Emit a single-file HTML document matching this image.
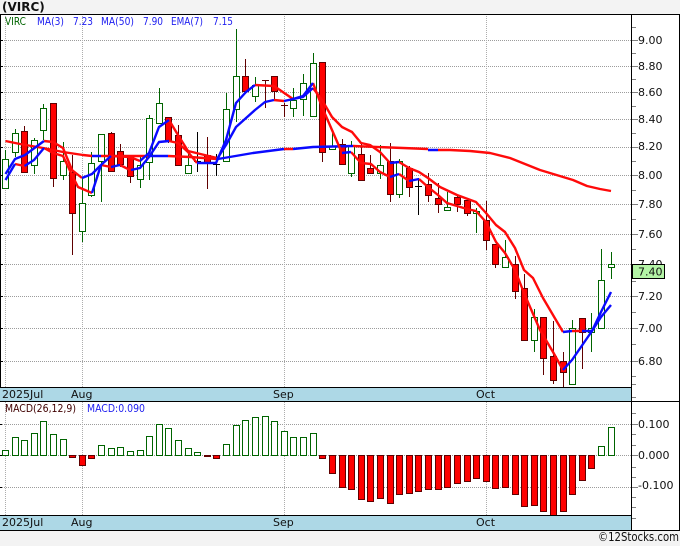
<!DOCTYPE html>
<html>
<head>
<meta charset="utf-8">
<style>
html,body{margin:0;padding:0;width:680px;height:546px;overflow:hidden;background:#f3f3f3}
svg{display:block}
text{font-family:"DejaVu Sans","Liberation Sans",sans-serif;font-size:11px;fill:#111}
.s{font-size:11px}
</style>
</head>
<body>
<svg width="680" height="546" viewBox="0 0 680 546" xmlns="http://www.w3.org/2000/svg">
<rect x="0" y="0" width="680" height="546" fill="#f3f3f3"/>
<rect x="0" y="14" width="680" height="516" fill="#fff"/>
<rect x="0" y="388" width="632" height="13" fill="#add8e6"/>
<rect x="0" y="516" width="632" height="14" fill="#add8e6"/>

<!-- grid -->
<path d="M0 40.5H632M0 66.5H632M0 92.5H632M0 119.5H632M0 147.5H632M0 175.5H632M0 204.5H632M0 234.5H632M0 264.5H632M0 296.5H632M0 328.5H632M0 361.5H632M0 424.5H632M0 455.5H632M0 487.5H632" stroke="#9c9c9c" stroke-dasharray="1 1" fill="none"/>
<path d="M5.5 14V388M82.5 14V388M284.5 14V388M486.5 14V388M5.5 402V516M82.5 402V516M284.5 402V516M486.5 402V516" stroke="#adadad" stroke-dasharray="1 1" fill="none"/>

<!-- candle wicks -->
<g shape-rendering="crispEdges" fill="none">
<path stroke="#006400" d="M5.5 150V188M15.5 129V157M34.5 138V174M43.5 104V140M63.5 142V180M82.5 178V242M91.5 152V197M101.5 134V202M140.5 157V188M149.5 115V180M159.5 88V123M188.5 153V173M226.5 93V161M236.5 29V122M255.5 77V102M293.5 88V117M303.5 74V116M313.5 53V116M332.5 133V149M351.5 141V177M380.5 145V179M399.5 159V198M447.5 192V210M476.5 208V233M505.5 240V267M534.5 309V352M572.5 320V384M591.5 313V352M601.5 249V328M611.5 252V279"/>
<path stroke="#600000" d="M24.5 126V173M53.5 103V187M72.5 155V255M111.5 132V172M120.5 144V167M130.5 157V183M168.5 117V143M178.5 125V165M207.5 137V189M245.5 59V91M265.5 80V108M262 80.5H269M274.5 76V100M284.5 103V117M281 105.5H288M322.5 62V162M342.5 139V164M361.5 142V180M370.5 155V174M390.5 143V202M409.5 166V197M428.5 173V202M438.5 183V213M457.5 195V212M467.5 198V216M486.5 201V250M495.5 244V268M515.5 256V299M524.5 274V340M543.5 317V375M553.5 321V384M563.5 352V387M582.5 318V369"/>
<path stroke="#000" d="M197.5 132V172M194 161.5H201M216.5 154V176M213 164.5H220M418.5 178V215M415 186.5H422"/>
<!-- green bodies -->
<path stroke="#006400" fill="#fff" d="M2.5 159.5h6v29h-6zM12.5 133.5h6v19h-6zM31.5 140.5h6v25h-6zM40.5 108.5h6v22h-6zM60.5 161.5h6v14h-6zM79.5 203.5h6v28h-6zM88.5 163.5h6v32h-6zM98.5 134.5h6v27h-6zM137.5 165.5h6v14h-6zM146.5 118.5h6v44h-6zM156.5 103.5h6v20h-6zM185.5 165.5h6v8h-6zM223.5 109.5h6v52h-6zM233.5 76.5h6v33h-6zM252.5 85.5h6v11h-6zM290.5 100.5h6v8h-6zM300.5 83.5h6v16h-6zM310.5 63.5h6v53h-6zM329.5 146.5h6v3h-6zM348.5 145.5h6v28h-6zM377.5 165.5h6v8h-6zM396.5 161.5h6v33h-6zM444.5 207.5h6v3h-6zM473.5 211.5h6v2h-6zM502.5 257.5h6v10h-6zM531.5 317.5h6v23h-6zM569.5 328.5h6v56h-6zM588.5 328.5h6v4h-6zM598.5 280.5h6v48h-6zM608.5 264.5h6v3h-6z"/>
<!-- red bodies -->
<path stroke="#600000" fill="#f00" d="M21.5 131.5h6v41h-6zM50.5 103.5h6v75h-6zM69.5 172.5h6v41h-6zM108.5 133.5h6v38h-6zM117.5 151.5h6v13h-6zM127.5 157.5h6v19h-6zM165.5 117.5h6v23h-6zM175.5 135.5h6v30h-6zM204.5 155.5h6v8h-6zM242.5 76.5h6v15h-6zM271.5 76.5h6v15h-6zM319.5 62.5h6v90h-6zM339.5 144.5h6v20h-6zM358.5 154.5h6v26h-6zM367.5 168.5h6v5h-6zM387.5 161.5h6v33h-6zM406.5 168.5h6v19h-6zM425.5 184.5h6v11h-6zM435.5 198.5h6v6h-6zM454.5 197.5h6v7h-6zM464.5 200.5h6v13h-6zM483.5 220.5h6v20h-6zM492.5 244.5h6v20h-6zM512.5 264.5h6v27h-6zM521.5 288.5h6v52h-6zM540.5 317.5h6v41h-6zM550.5 356.5h6v24h-6zM560.5 361.5h6v11h-6zM579.5 318.5h6v14h-6z"/>
</g>

<!-- moving averages -->
<g fill="none" stroke-width="2.4" stroke-linejoin="round" stroke-linecap="butt">
<path stroke="#ff0a0a" d="M5.5 141L20 144L43 148L63 152L83 155L92 156M101 156L110 156L148 156M168 156L190 157L217 159M284 149L293 149M353 146L428 149M438 150L450 150L470 151L490 153L510 158L525 164L540 170L573 180L587 186L600 189L611 191"/>
<path stroke="#0a0aff" d="M92 156L101 156M148 156L168 156M218 159L253 153L284 149M293 149L313 147L353 146M428 150L438 150"/>
<path stroke="#ff0a0a" d="M15 164L24.5 166M44 148L53 153L63 156L73 177L78 187L92 193M101 165L111 167M120 165L130 170M169 141L178 143L188 152L197 163M255 85L274 86L293 99M313 83L322 107L332 130L342 153M351 152L361 163L371 164L380 172L390 177M399 174L409 181M419 179L428 187L438 195L447 203L467 209L476 211L486 222L496 242L505 253L515 270L524 293L540 330L553 352L563 370"/>
<path stroke="#ff0a0a" d="M44 141L53 142L63 148L72 170L82 178M111 156L130 157L140 161M169 120L178 135L188 151L217 158M274 100L284 101M313 88L322 100L332 117L342 127L352 132L361 143L370 145L380 152L390 163M399 162L409 168L419 172L428 178L440 187L457 195L476 202L486 213L496 225L505 232L515 248L524 270L533 278L543 298L563 332M572 331L582 331"/>
<path stroke="#0a0aff" d="M5.5 180L15 164M24.5 166L34 160L44 148M92 193L101 165M111 167L120 165M131 170L140 168L149 157L159 142L169 141M197 163L216 163L226 140L236 103L246 92L255 85M293 99L303 96L313 83M342 153L351 152M390 177L399 174M409 181L419 179M563 370L572 360L592 331L601 312L611 292"/>
<path stroke="#0a0aff" d="M5.5 174L15 159L25 155L44 141M82 178L92 174L101 165L111 156M140 161L149 153L159 127L169 120M217 159L226 145L236 127L255 110L265 102L274 100M284 101L303 97L313 88M390 163L399 162M563 332L572 331M582 331L592 331L601 317L611 305"/>
</g>

<!-- MACD bars -->
<g shape-rendering="crispEdges">
<path stroke="#006400" fill="#fff" d="M2.5 450.5h6v5h-6zM12.5 437.5h6v18h-6zM21.5 440.5h6v15h-6zM31.5 433.5h6v22h-6zM40.5 421.5h6v34h-6zM50.5 434.5h6v21h-6zM60.5 439.5h6v16h-6zM98.5 445.5h6v10h-6zM108.5 448.5h6v7h-6zM117.5 447.5h6v8h-6zM127.5 451.5h6v4h-6zM137.5 450.5h6v5h-6zM146.5 436.5h6v19h-6zM156.5 424.5h6v31h-6zM165.5 428.5h6v27h-6zM175.5 440.5h6v15h-6zM185.5 448.5h6v7h-6zM194.5 452.5h6v3h-6zM223.5 444.5h6v11h-6zM233.5 425.5h6v30h-6zM242.5 420.5h6v35h-6zM252.5 417.5h6v38h-6zM262.5 416.5h6v39h-6zM271.5 421.5h6v34h-6zM281.5 431.5h6v24h-6zM290.5 437.5h6v18h-6zM300.5 437.5h6v18h-6zM310.5 433.5h6v22h-6zM598.5 446.5h6v9h-6zM608.5 427.5h6v28h-6z"/>
<path stroke="#600000" fill="#f00" d="M69.5 455.5h6v2h-6zM79.5 455.5h6v10h-6zM88.5 455.5h6v3h-6zM204.5 455.5h6v1h-6zM213.5 455.5h6v3h-6zM319.5 455.5h6v3h-6zM329.5 455.5h6v18h-6zM339.5 455.5h6v32h-6zM348.5 455.5h6v34h-6zM358.5 455.5h6v44h-6zM367.5 455.5h6v46h-6zM377.5 455.5h6v43h-6zM387.5 455.5h6v48h-6zM396.5 455.5h6v39h-6zM406.5 455.5h6v38h-6zM415.5 455.5h6v36h-6zM425.5 455.5h6v34h-6zM435.5 455.5h6v34h-6zM444.5 455.5h6v32h-6zM454.5 455.5h6v28h-6zM464.5 455.5h6v26h-6zM473.5 455.5h6v23h-6zM483.5 455.5h6v26h-6zM492.5 455.5h6v33h-6zM502.5 455.5h6v32h-6zM512.5 455.5h6v39h-6zM521.5 455.5h6v51h-6zM531.5 455.5h6v50h-6zM540.5 455.5h6v56h-6zM550.5 455.5h6v60h-6zM560.5 455.5h6v56h-6zM569.5 455.5h6v39h-6zM579.5 455.5h6v25h-6zM588.5 455.5h6v13h-6z"/>
</g>

<!-- frame -->
<g shape-rendering="crispEdges" fill="none">
<path stroke="#000" d="M0 14.5H680M0 387.5H632M0 401.5H680M0 515.5H632M0 530.5H680M631.5 14V530M679.5 14V530M0.5 14V387"/>
<path stroke="#000" d="M0 40.5h3M0 66.5h3M0 92.5h3M0 119.5h3M0 147.5h3M0 175.5h3M0 204.5h3M0 234.5h3M0 264.5h3M0 296.5h3M0 328.5h3M0 361.5h3M0 424.5h2M0 455.5h2M0 487.5h2"/>
<path stroke="#808080" d="M632 27.5h4M632 40.5h6M632 53.5h4M632 66.5h6M632 79.5h4M632 92.5h6M632 106.5h4M632 119.5h6M632 133.5h4M632 147.5h6M632 161.5h4M632 175.5h6M632 190.5h4M632 204.5h6M632 219.5h4M632 234.5h6M632 249.5h4M632 281.5h4M632 296.5h6M632 312.5h4M632 328.5h6M632 344.5h4M632 361.5h6M632 376.5h4M632 384.5h4M632 397.5h4M632 413.5h4M632 424.5h6M632 434.5h4M632 445.5h4M632 455.5h6M632 467.5h4M632 477.5h4M632 487.5h6M632 497.5h4M632 507.5h4M632 518.5h4"/>
</g>

<!-- axis label behind box -->
<text x="638" y="268">7.40</text>
<!-- price label -->
<rect x="632.5" y="264.5" width="32" height="14" fill="#b4f5a6" stroke="#000" shape-rendering="crispEdges"/>

<!-- text -->
<text x="2" y="11" style="font-weight:bold;font-size:12px;fill:#111">(VIRC)</text>
<text class="s" x="5" y="25" style="fill:#006400" textLength="21" lengthAdjust="spacingAndGlyphs">VIRC</text>
<text class="s" x="37" y="25" style="fill:#2020f0" textLength="27" lengthAdjust="spacingAndGlyphs">MA(3)</text>
<text class="s" x="73" y="25" style="fill:#2020f0" textLength="20" lengthAdjust="spacingAndGlyphs">7.23</text>
<text class="s" x="101" y="25" style="fill:#2020f0" textLength="33" lengthAdjust="spacingAndGlyphs">MA(50)</text>
<text class="s" x="143" y="25" style="fill:#2020f0" textLength="20" lengthAdjust="spacingAndGlyphs">7.90</text>
<text class="s" x="171" y="25" style="fill:#2020f0" textLength="32" lengthAdjust="spacingAndGlyphs">EMA(7)</text>
<text class="s" x="213" y="25" style="fill:#2020f0" textLength="20" lengthAdjust="spacingAndGlyphs">7.15</text>

<text x="638" y="44">9.00</text>
<text x="638" y="70">8.80</text>
<text x="638" y="96">8.60</text>
<text x="638" y="123">8.40</text>
<text x="638" y="150">8.20</text>
<text x="638" y="179">8.00</text>
<text x="638" y="208">7.80</text>
<text x="638" y="238">7.60</text>
<text x="638" y="300">7.20</text>
<text x="638" y="332">7.00</text>
<text x="638" y="365">6.80</text>
<text x="638" y="275.5">7.40</text>

<text x="2" y="398">2025Jul</text>
<text x="71" y="398">Aug</text>
<text x="273" y="398">Sep</text>
<text x="476" y="398">Oct</text>

<text class="s" x="5" y="412" style="fill:#400000" textLength="71" lengthAdjust="spacingAndGlyphs">MACD(26,12,9)</text>
<text class="s" x="87" y="412" style="fill:#2020f0" textLength="58" lengthAdjust="spacingAndGlyphs">MACD:0.090</text>

<text x="638" y="428">0.100</text>
<text x="638" y="459">0.000</text>
<text x="638" y="489">-0.100</text>

<text x="2" y="526">2025Jul</text>
<text x="71" y="526">Aug</text>
<text x="273" y="526">Sep</text>
<text x="476" y="526">Oct</text>

<text x="598" y="541" style="font-size:12px" textLength="81" lengthAdjust="spacingAndGlyphs">©12Stocks.com</text>
</svg>
</body>
</html>
